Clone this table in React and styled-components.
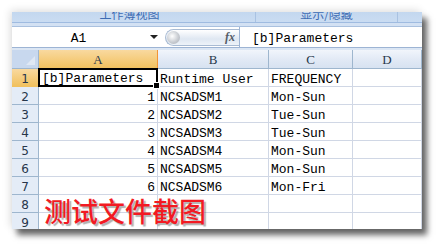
import React from "react";
import styled, { createGlobalStyle } from "styled-components";

const GlobalStyle = createGlobalStyle`
    html, body {
        margin: 0;
        padding: 0;
        background: #ffffff;
        overflow: hidden;
    }
`

const Page = styled.div`
    width: 442px;
    height: 248px;
    padding: 12px 0 0 12px;
    box-sizing: border-box;
    background: #ffffff;
`

const Window = styled.div`
    position: relative;
    width: 410px;
    height: 217px;
    overflow: hidden;
    background: #ffffff;
    box-shadow: 5px 6px 6px rgba(0, 0, 0, 0.6), -2px -2px 8px rgba(0, 0, 0, 0.12);
    font-family: "Liberation Mono", "DejaVu Sans Mono", monospace;
`

const Ribbon = styled.div`
    display: flex;
    height: 10px;
    background: linear-gradient(#c3d7ef, #cadcf2);
    border-bottom: 1px solid #9fbbe0;
    overflow: hidden;
`

const RibbonGroup = styled.div`
    width: ${p => p.w}px;
    flex: none;
    display: flex;
    justify-content: center;
    border-right: ${p => (p.last ? "none" : "1px solid #a9c2e2")};
    box-sizing: border-box;
    overflow: hidden;
    padding-right: ${p => p.shift || 0}px;

    span {
        margin-top: -5px;
        font-family: "Noto Sans CJK SC", sans-serif;
        font-size: 12px;
        line-height: 14px;
        color: #3d6bb3;
    }
`

const Strip = styled.div`
    height: 3px;
    background: #d3e1f3;
    border-bottom: 1px solid #aac1df;
`

const FormulaBar = styled.div`
    display: flex;
    align-items: center;
    height: 20px;
    background: #ffffff;
    border-bottom: 1px solid #9db4d4;
`

const NameBox = styled.div`
    width: 148px;
    flex: none;
    display: flex;
    align-items: center;
    font-size: 13px;
    color: #000;

    .name {
        flex: 1;
        text-align: center;
        padding-right: 5px;
        padding-top: 2px;
    }
    .arrow {
        width: 0;
        height: 0;
        border-left: 4px solid transparent;
        border-right: 4px solid transparent;
        border-top: 4px solid #222;
        margin-right: 2px;
    }
`

const Pill = styled.div`
    position: relative;
    width: 74px;
    height: 17px;
    margin-left: 5px;
    flex: none;
    display: flex;
    align-items: center;
    justify-content: flex-end;
    box-sizing: border-box;
    border: 1px solid #a9bbd3;
    border-right: none;
    border-radius: 9px 0 0 9px;
    background: linear-gradient(#ffffff, #dfe7f2 60%, #eef3f9);

    &::before {
        content: "";
        position: absolute;
        left: 1px;
        top: 1px;
        width: 13px;
        height: 13px;
        border-radius: 50%;
        background: radial-gradient(circle at 40% 40%, #ffffff, #c4c8ce 60%, #a8adb5);
    }

    .fx {
        font-family: "Liberation Serif", serif;
        font-style: italic;
        font-weight: bold;
        font-size: 12px;
        color: #555c66;
        margin-right: 4px;
    }
`

const FormulaText = styled.div`
    flex: 1;
    height: 100%;
    display: flex;
    align-items: center;
    border-left: 1px solid #9db4d4;
    padding: 2px 0 0 12px;
    box-sizing: border-box;
    font-size: 13px;
    color: #000;
`

const Gap = styled.div`
    height: 2px;
    background: #dbe6f4;
`

const Sheet = styled.div`
    display: grid;
    grid-template-columns: 27px 119px 111px 84px 69px;
    grid-template-rows: 19px repeat(9, 18px);
`

const ColHead = styled.div`
    display: flex;
    align-items: center;
    justify-content: center;
    box-sizing: border-box;
    padding-top: 2px;
    font-family: "Liberation Serif", serif;
    font-size: 13px;
    color: #27364b;
    border-right: 1px solid ${p => (p.active ? "#f29436" : "#9eb6ce")};
    border-bottom: 1px solid ${p => (p.active ? "#f29436" : "#9eb6ce")};
    background: ${p => (p.active
        ? "linear-gradient(#f9d99f, #f1c15f)"
        : "linear-gradient(#f1f5fb, #e1e9f5 55%, #d7e2f1)")};
`

const Corner = styled.div`
    position: relative;
    box-sizing: border-box;
    background: #c8d8ee;
    border-right: 1px solid #9eb6ce;
    border-bottom: 1px solid #9eb6ce;

    &::after {
        content: "";
        position: absolute;
        right: 3px;
        bottom: 3px;
        width: 0;
        height: 0;
        border-left: 9px solid transparent;
        border-bottom: 9px solid #dfe8f4;
    }
`

const RowHead = styled.div`
    display: flex;
    align-items: center;
    justify-content: center;
    box-sizing: border-box;
    padding-top: 2px;
    font-family: "DejaVu Sans", sans-serif;
    font-size: 12px;
    color: #27364b;
    border-right: 1px solid ${p => (p.active ? "#f29436" : "#9eb6ce")};
    border-bottom: 1px solid ${p => (p.active ? "#f1c15f" : "#9eb6ce")};
    background: ${p => (p.active ? "linear-gradient(#f9d99f, #f1c15f)" : "#e4ecf7")};
`

const Cell = styled.div`
    position: relative;
    display: flex;
    align-items: center;
    justify-content: ${p => (p.num ? "flex-end" : "flex-start")};
    box-sizing: border-box;
    padding: 3px 2px 0;
    font-size: 13px;
    color: #000;
    white-space: nowrap;
    overflow: visible;
    border-right: 1px solid #d0d7e5;
    border-bottom: 1px solid #d0d7e5;
    ${p => p.selected && `
        border: 2px solid #000;
        margin: -1px 0 0 -1px;
        padding-top: 2px;
        z-index: 2;
        &::after {
            content: "";
            position: absolute;
            right: -4px;
            bottom: -4px;
            width: 5px;
            height: 5px;
            background: #000;
            border: 1px solid #fff;
        }
    `}
`

const Stamp = styled.div`
    position: absolute;
    left: 32px;
    top: 186px;
    font-family: "Noto Sans CJK SC", sans-serif;
    font-size: 27px;
    font-weight: 500;
    line-height: 26px;
    color: #f21a22;
    text-shadow: 2px 2px 1px rgba(80, 80, 80, 0.45);
    pointer-events: none;
    z-index: 3;
`

const rows = [
    ["[b]Parameters", "Runtime User", "FREQUENCY"],
    ["1", "NCSADSM1", "Mon-Sun"],
    ["2", "NCSADSM2", "Tue-Sun"],
    ["3", "NCSADSM3", "Tue-Sun"],
    ["4", "NCSADSM4", "Mon-Sun"],
    ["5", "NCSADSM5", "Mon-Sun"],
    ["6", "NCSADSM6", "Mon-Fri"],
    ["", "", ""],
    ["", "", ""],
]

export default function App() {
    return (
        <Page>
            <GlobalStyle />
            <Window>
                <Ribbon>
                    <RibbonGroup w={244} shift={8}><span>工作簿视图</span></RibbonGroup>
                    <RibbonGroup w={142}><span>显示/隐藏</span></RibbonGroup>
                    <RibbonGroup w={24} last />
                </Ribbon>
                <Strip />
                <FormulaBar>
                    <NameBox>
                        <span className="name">A1</span>
                        <span className="arrow" />
                    </NameBox>
                    <Pill><span className="fx">fx</span></Pill>
                    <FormulaText>[b]Parameters</FormulaText>
                </FormulaBar>
                <Gap />
                <Sheet>
                    <Corner />
                    <ColHead active>A</ColHead>
                    <ColHead>B</ColHead>
                    <ColHead>C</ColHead>
                    <ColHead>D</ColHead>
                    {rows.map((r, i) => (
                        <React.Fragment key={i}>
                            <RowHead active={i === 0}>{i + 1}</RowHead>
                            <Cell num={i > 0} selected={i === 0}>{r[0]}</Cell>
                            <Cell>{r[1]}</Cell>
                            <Cell>{r[2]}</Cell>
                            <Cell />
                        </React.Fragment>
                    ))}
                </Sheet>
                <Stamp>测试文件截图</Stamp>
            </Window>
        </Page>
    )
}
